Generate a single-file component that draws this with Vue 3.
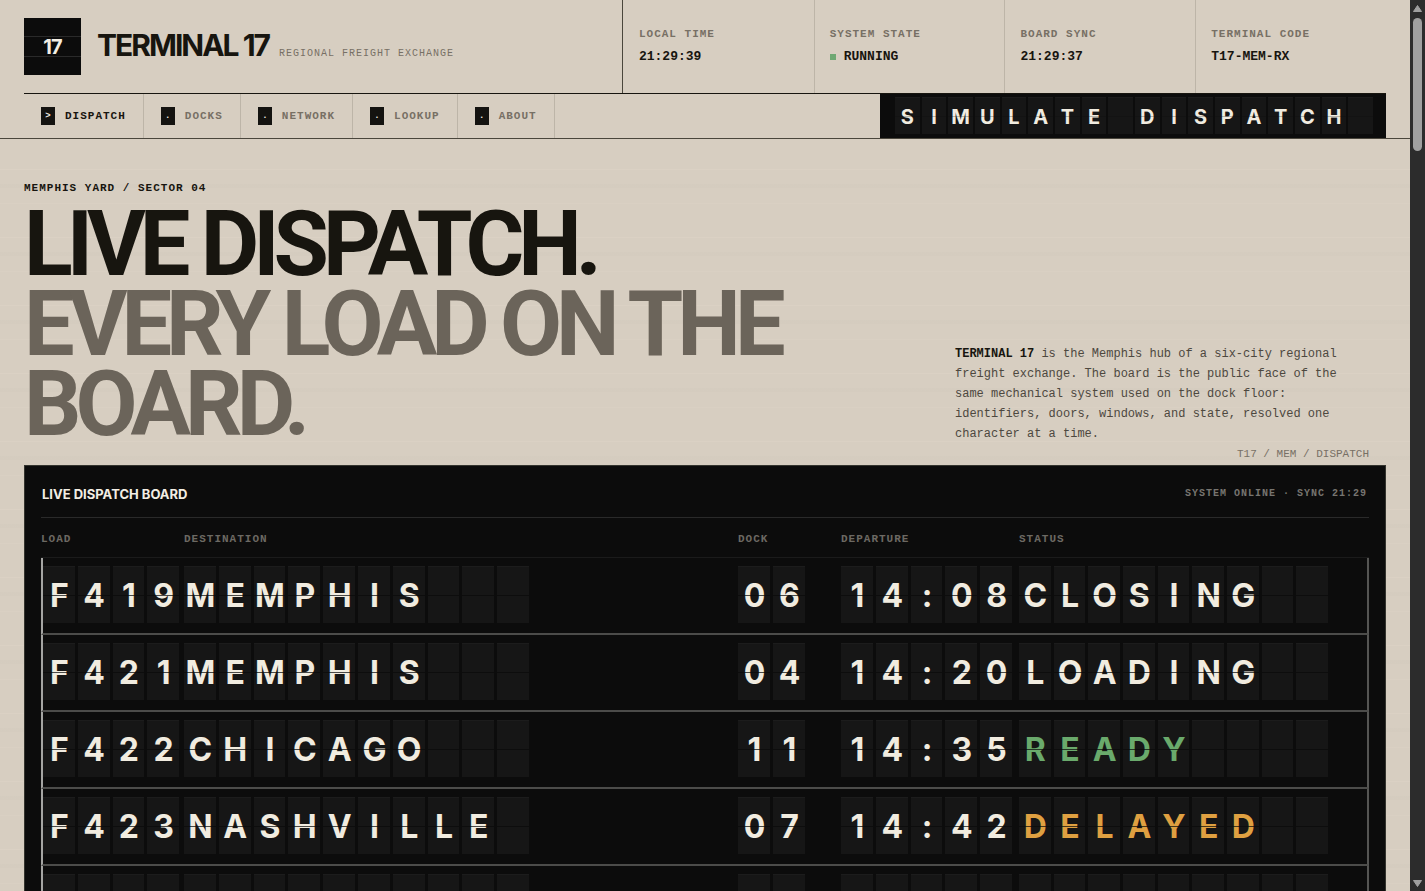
<script setup>
const stats = [
  { label: 'LOCAL TIME', value: '21:29:39' },
  { label: 'SYSTEM STATE', value: 'RUNNING', live: true },
  { label: 'BOARD SYNC', value: '21:29:37' },
  { label: 'TERMINAL CODE', value: 'T17-MEM-RX' },
]
const links = [
  { mark: '>', text: 'DISPATCH', active: true },
  { mark: '.', text: 'DOCKS' },
  { mark: '.', text: 'NETWORK' },
  { mark: '.', text: 'LOOKUP' },
  { mark: '.', text: 'ABOUT' },
]
const columns = [
  { key: 'load', label: 'LOAD', size: 4 },
  { key: 'destination', label: 'DESTINATION', size: 10 },
  { key: 'dock', label: 'DOCK', size: 2 },
  { key: 'departure', label: 'DEPARTURE', size: 5 },
  { key: 'status', label: 'STATUS', size: 9 },
]
const rows = [
  { load: 'F419', destination: 'MEMPHIS', dock: '06', departure: '14:08', status: 'CLOSING' },
  { load: 'F421', destination: 'MEMPHIS', dock: '04', departure: '14:20', status: 'LOADING' },
  { load: 'F422', destination: 'CHICAGO', dock: '11', departure: '14:35', status: 'READY' },
  { load: 'F423', destination: 'NASHVILLE', dock: '07', departure: '14:42', status: 'DELAYED' },
  { load: '', destination: '', dock: '', departure: '', status: '' },
]
const flaps = (text, size) => text.padEnd(size, ' ').split('')
</script>

<template>
  <div class="window">
    <div class="page">
      <header class="header">
        <div class="top">
          <div class="brand">
            <div class="logo">17</div>
            <div class="brand-text">
              <span class="name">TERMINAL 17</span>
              <span class="tagline">REGIONAL FREIGHT EXCHANGE</span>
            </div>
          </div>
          <dl class="stats">
            <div v-for="s in stats" :key="s.label" class="stat">
              <dt>{{ s.label }}</dt>
              <dd><i v-if="s.live" class="lamp"></i>{{ s.value }}</dd>
            </div>
          </dl>
        </div>
        <div class="bar">
          <nav class="nav">
            <a v-for="l in links" :key="l.text" href="#" :class="{ active: l.active }">
              <span class="mark">{{ l.mark }}</span>{{ l.text }}
            </a>
          </nav>
          <button class="simulate" type="button" aria-label="Simulate dispatch">
            <span v-for="(c, i) in flaps('SIMULATE DISPATCH', 18)" :key="i" class="flap">{{ c }}</span>
          </button>
        </div>
      </header>

      <main class="main">
        <section class="hero">
          <div>
            <p class="eyebrow">MEMPHIS YARD / SECTOR 04</p>
            <h1>LIVE DISPATCH.<br /><span>EVERY LOAD ON THE BOARD.</span></h1>
          </div>
          <p class="intro">
            <strong>TERMINAL 17</strong> is the Memphis hub of a six-city regional freight
            exchange. The board is the public face of the same mechanical system used on the
            dock floor: identifiers, doors, windows, and state, resolved one character at a time.
          </p>
        </section>

        <section class="board">
          <div class="board-tag">T17 / MEM / DISPATCH</div>
          <div class="board-head">
            <h2>LIVE DISPATCH BOARD</h2>
            <span>SYSTEM ONLINE · SYNC 21:29</span>
          </div>
          <table>
            <thead>
              <tr>
                <th v-for="c in columns" :key="c.key" scope="col" :class="c.key">{{ c.label }}</th>
              </tr>
            </thead>
            <tbody>
              <tr v-for="(r, n) in rows" :key="n">
                <td v-for="c in columns" :key="c.key">
                  <div class="flaps" :class="[c.key, c.key === 'status' && r.status.toLowerCase()]">
                    <span v-for="(ch, i) in flaps(r[c.key], c.size)" :key="i" class="flap">{{ ch }}</span>
                  </div>
                </td>
              </tr>
            </tbody>
          </table>
        </section>
      </main>
    </div>
    <div class="scrollbar" aria-hidden="true">
      <svg width="9" height="7" viewBox="0 0 9 7"><path d="M4.5 0.5 8.5 6.5H0.5z" fill="#a0a0a0" stroke="#a0a0a0" stroke-linejoin="round" /></svg>
      <div class="thumb"></div>
      <svg width="9" height="7" viewBox="0 0 9 7"><path d="M4.5 6.5 8.5 0.5H0.5z" fill="#a0a0a0" stroke="#a0a0a0" stroke-linejoin="round" /></svg>
    </div>
  </div>
</template>

<style>
body {
  margin: 0;
  background: #d7cec1;
}
</style>

<style scoped>
* {
  box-sizing: border-box;
}
.window {
  display: flex;
  height: 100vh;
  overflow: hidden;
  color: #17150f;
  font-family: "Liberation Mono", monospace;
}
.page {
  flex: 1;
  min-width: 0;
  overflow: hidden;
  background:
    repeating-linear-gradient(#0000 0 33px, #e0d6c966 33px 34px, #0000 34px 48px, #cfc7ba44 48px 52px, #0000 52px 67px, #e0d6c944 67px 68px),
    #d7cec1;
}
.header {
  padding: 0 24px;
  background: #d7cec1;
  border-bottom: 1px solid #4a463c;
}
.top {
  display: grid;
  grid-template-columns: 18fr 23fr;
  height: 94px;
  border-bottom: 1px solid #17150f;
}
.brand {
  display: flex;
  align-items: center;
  gap: 16px;
}
.logo {
  display: grid;
  place-items: center;
  width: 57px;
  height: 57px;
  background: linear-gradient(#0000 0 18px, #2a2a2a 18px 19px, #0000 19px 38px, #2a2a2a 38px 39px, #0000 39px), #0c0c0c;
  color: #f3eee4;
  font: 700 20px Inter, sans-serif;
  letter-spacing: -1px;
}
.brand-text {
  display: flex;
  align-items: baseline;
  gap: 10px;
  padding-bottom: 4px;
  white-space: nowrap;
}
.name {
  font: 700 30px Inter, sans-serif;
  letter-spacing: -2px;
}
.tagline {
  color: #777065;
  font-size: 10px;
  letter-spacing: 1px;
}
.stats {
  display: grid;
  grid-template-columns: repeat(4, 1fr);
  margin: 0;
  border-left: 1px solid #4a463c;
}
.stat {
  display: flex;
  flex-direction: column;
  justify-content: center;
  gap: 7px;
  padding: 0 15px 2px;
}
.stat:first-child {
  padding-left: 16px;
}
.stat + .stat {
  border-left: 1px solid #bdb5a8;
}
dt {
  color: #777065;
  font-size: 11px;
  font-weight: 700;
  line-height: 16px;
  letter-spacing: 1px;
}
dd {
  display: flex;
  align-items: center;
  gap: 8px;
  margin: 0;
  font-size: 13px;
  font-weight: 700;
  line-height: 16px;
}
.lamp {
  width: 6px;
  height: 6px;
  background: #6fa873;
}
.bar {
  display: flex;
  justify-content: space-between;
  height: 44px;
}
.nav {
  display: flex;
}
.nav a {
  display: flex;
  align-items: center;
  gap: 10px;
  padding: 0 17px;
  border-right: 1px solid #bdb5a8;
  color: #777065;
  font-size: 11px;
  font-weight: 700;
  letter-spacing: 1px;
  text-decoration: none;
}
.nav a.active {
  color: #17150f;
}
.mark {
  display: grid;
  place-items: center;
  width: 14px;
  height: 18px;
  background: #141310;
  color: #f3eee4;
  font-size: 9px;
  letter-spacing: 0;
}
.simulate {
  display: grid;
  grid-template-columns: repeat(18, 1fr);
  gap: 2px;
  width: 506px;
  padding: 3px 13px 4px 15px;
  border: 0;
  background: #0c0c0c;
  cursor: pointer;
}
.flap {
  position: relative;
  display: grid;
  place-items: center;
  background: #161616;
  color: #f1ece0;
  font-family: Inter, sans-serif;
  font-weight: 700;
  border-top: 1px solid #1c1c1c;
}
.flap::after {
  content: "";
  position: absolute;
  inset: 50% 0 auto;
  height: 1px;
  background: #0a0a0ab8;
}
.simulate .flap {
  padding-top: 1px;
  font-size: 20px;
}
.simulate .flap::after {
  background: #0a0a0a40;
}
.main {
  padding: 0 24px;
}
.hero {
  display: grid;
  grid-template-columns: 1fr 431px;
  gap: 48px;
  align-items: end;
  padding-top: 41px;
}
.eyebrow {
  margin: 0 0 9px;
  font-size: 11px;
  font-weight: 700;
  line-height: 16px;
  letter-spacing: 1px;
}
h1 {
  margin: 0;
  font: 700 90px/80px Roboto, sans-serif;
  letter-spacing: -6px;
}
h1 span {
  color: #6b645a;
}
.intro {
  max-width: 400px;
  margin: 0;
  padding-bottom: 1px;
  color: #4d483f;
  font-size: 12px;
  line-height: 20px;
}
.intro strong {
  color: #17150f;
}
.board {
  position: relative;
  margin-top: 20px;
  padding: 0 16px;
  border: 1px solid #35352f;
  background: #0c0c0c;
}
.board-tag {
  position: absolute;
  right: 16px;
  bottom: 100%;
  color: #777065;
  font-size: 11px;
  line-height: 24px;
}
.board-head {
  display: flex;
  justify-content: space-between;
  align-items: center;
  height: 52px;
  padding: 4px 2px 0 1px;
  border-bottom: 1px solid #2a2a2a;
}
h2 {
  margin: 0;
  color: #f3eee4;
  font: 700 13px Inter, sans-serif;
}
.board-head span {
  color: #777570;
  font-size: 10px;
  font-weight: 700;
  letter-spacing: 1px;
}
table {
  width: 100%;
  table-layout: fixed;
  border-collapse: separate;
  border-spacing: 0;
}
th {
  height: 40px;
  padding: 2px 0 0;
  border-bottom: 1px solid #1b1b1b;
  color: #6c6963;
  font-size: 11px;
  font-weight: 700;
  letter-spacing: 1px;
  text-align: left;
}
th.load {
  width: 143px;
}
th.dock {
  width: 103px;
}
th.departure {
  width: 178px;
}
th.status {
  width: 350px;
}
td {
  padding: 8px 0 10px;
  border-bottom: 2px solid #4c4c4a;
}
td:first-child {
  border-left: 2px solid #a5a5a3;
}
td:last-child {
  border-right: 2px solid #555553;
}
.flaps {
  display: grid;
  grid-auto-flow: column;
  grid-auto-columns: 1fr;
  gap: 3px;
  height: 57px;
}
.flaps .flap {
  padding-left: 1px;
  font-size: 32px;
}
.flaps.load {
  width: 136px;
}
.flaps.destination {
  width: 345px;
}
.flaps.dock {
  width: 67px;
}
.flaps.departure {
  width: 171px;
}
.flaps.status {
  width: 309px;
}
.ready .flap {
  color: #6aaa6c;
}
.delayed .flap {
  color: #dfa041;
}
.scrollbar {
  display: flex;
  flex-direction: column;
  align-items: center;
  width: 15px;
  padding: 5px 0 4px;
  background: #2c2c2c;
}
.thumb {
  width: 9px;
  height: 133px;
  margin: 6px 0 auto;
  border-radius: 5px;
  background: #a0a0a0;
}
</style>
